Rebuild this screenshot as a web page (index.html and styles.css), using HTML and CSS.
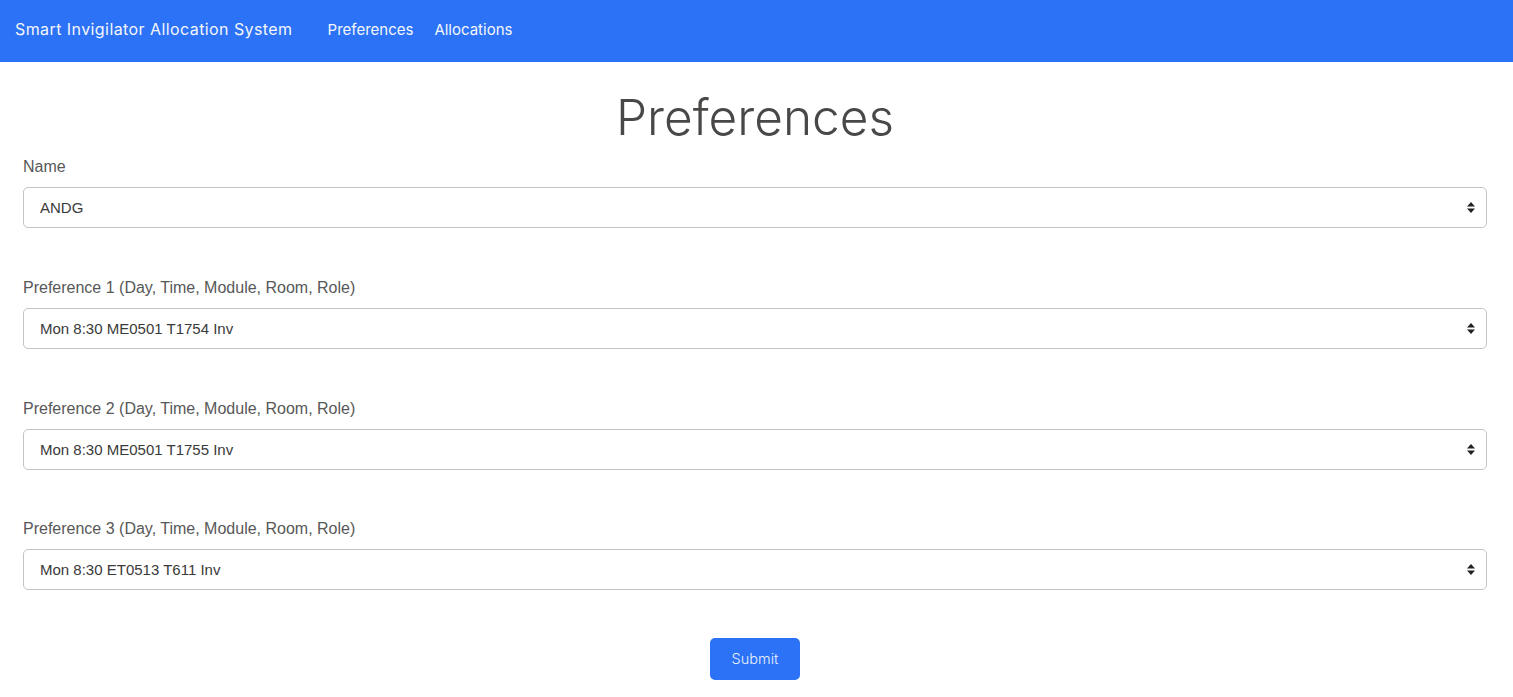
FILE: index.html
```html
<!DOCTYPE html>
<html lang="en">
<head>
<meta charset="utf-8">
<title>Preferences</title>
<link rel="stylesheet" href="styles.css">
</head>
<body>
<nav class="navbar">
  <span class="brand">Smart Invigilator Allocation System</span>
  <a class="nav-link" href="#">Preferences</a>
  <a class="nav-link" href="#">Allocations</a>
</nav>
<main class="content">
  <h1 class="title">Preferences</h1>
  <form class="form">
    <div class="group">
      <label class="label">Name</label>
      <div class="select-wrap">
        <select class="select"><option>ANDG</option></select>
        <svg class="caret" width="8" height="11" viewBox="0 0 8 11"><path d="M4 0L8 4.5H0Z M4 11L8 6.5H0Z" fill="#222"/></svg>
      </div>
    </div>
    <div class="group">
      <label class="label">Preference 1 (Day, Time, Module, Room, Role)</label>
      <div class="select-wrap">
        <select class="select"><option>Mon 8:30 ME0501 T1754 Inv</option></select>
        <svg class="caret" width="8" height="11" viewBox="0 0 8 11"><path d="M4 0L8 4.5H0Z M4 11L8 6.5H0Z" fill="#222"/></svg>
      </div>
    </div>
    <div class="group">
      <label class="label">Preference 2 (Day, Time, Module, Room, Role)</label>
      <div class="select-wrap">
        <select class="select"><option>Mon 8:30 ME0501 T1755 Inv</option></select>
        <svg class="caret" width="8" height="11" viewBox="0 0 8 11"><path d="M4 0L8 4.5H0Z M4 11L8 6.5H0Z" fill="#222"/></svg>
      </div>
    </div>
    <div class="group last">
      <label class="label">Preference 3 (Day, Time, Module, Room, Role)</label>
      <div class="select-wrap">
        <select class="select"><option>Mon 8:30 ET0513 T611 Inv</option></select>
        <svg class="caret" width="8" height="11" viewBox="0 0 8 11"><path d="M4 0L8 4.5H0Z M4 11L8 6.5H0Z" fill="#222"/></svg>
      </div>
    </div>
    <div class="actions">
      <button type="button" class="btn">Submit</button>
    </div>
  </form>
</main>
</body>
</html>
```
FILE: styles.css
```css
* { box-sizing: border-box; }
html, body { margin: 0; padding: 0; background: #fff; }
body { font-family: "Liberation Sans", Arial, sans-serif; }

.navbar {
  height: 62px;
  background: #2b72f6;
  display: flex;
  align-items: center;
  padding: 0 15px 4px;
  font-family: Inter, "Open Sans", sans-serif;
}
.brand {
  color: #f4f6fb;
  font-size: 16px;
  letter-spacing: 0.42px;
  margin-right: 35px;
}
.nav-link {
  color: #f4f6fb;
  font-size: 15px;
  text-decoration: none;
  margin-right: 21px;
}

.content {
  margin: 0 26px 0 23px;
}
.title {
  margin: 27px 0 8px;
  text-align: center;
  font-family: Inter, "Open Sans", sans-serif;
  font-weight: 300;
  font-size: 49.5px;
  line-height: 57.6px;
  color: #4a4847;
}
.form {
  display: flex;
  flex-direction: column;
  gap: 48px;
}
.group {
  display: flex;
  flex-direction: column;
  gap: 8px;
}
.group.last {
  margin-top: -1px;
}
.label {
  font-size: 16px;
  line-height: 24px;
  color: #585858;
}
.select-wrap {
  position: relative;
}
.select {
  appearance: none;
  -webkit-appearance: none;
  width: 100%;
  height: 41px;
  border: 1px solid #c4c4c4;
  border-radius: 5px;
  background: #fff;
  padding: 0 16px;
  font-family: "Liberation Sans", Arial, sans-serif;
  font-size: 15px;
  color: #3a3a3a;
}
.caret {
  position: absolute;
  right: 12px;
  top: 15px;
  pointer-events: none;
}
.actions {
  display: flex;
  justify-content: center;
}
.btn {
  width: 90px;
  height: 42px;
  border: none;
  border-radius: 5px;
  background: #2b72f6;
  color: #e9effc;
  font-family: Inter, "Open Sans", sans-serif;
  font-size: 14.5px;
  font-weight: 300;
}
```
